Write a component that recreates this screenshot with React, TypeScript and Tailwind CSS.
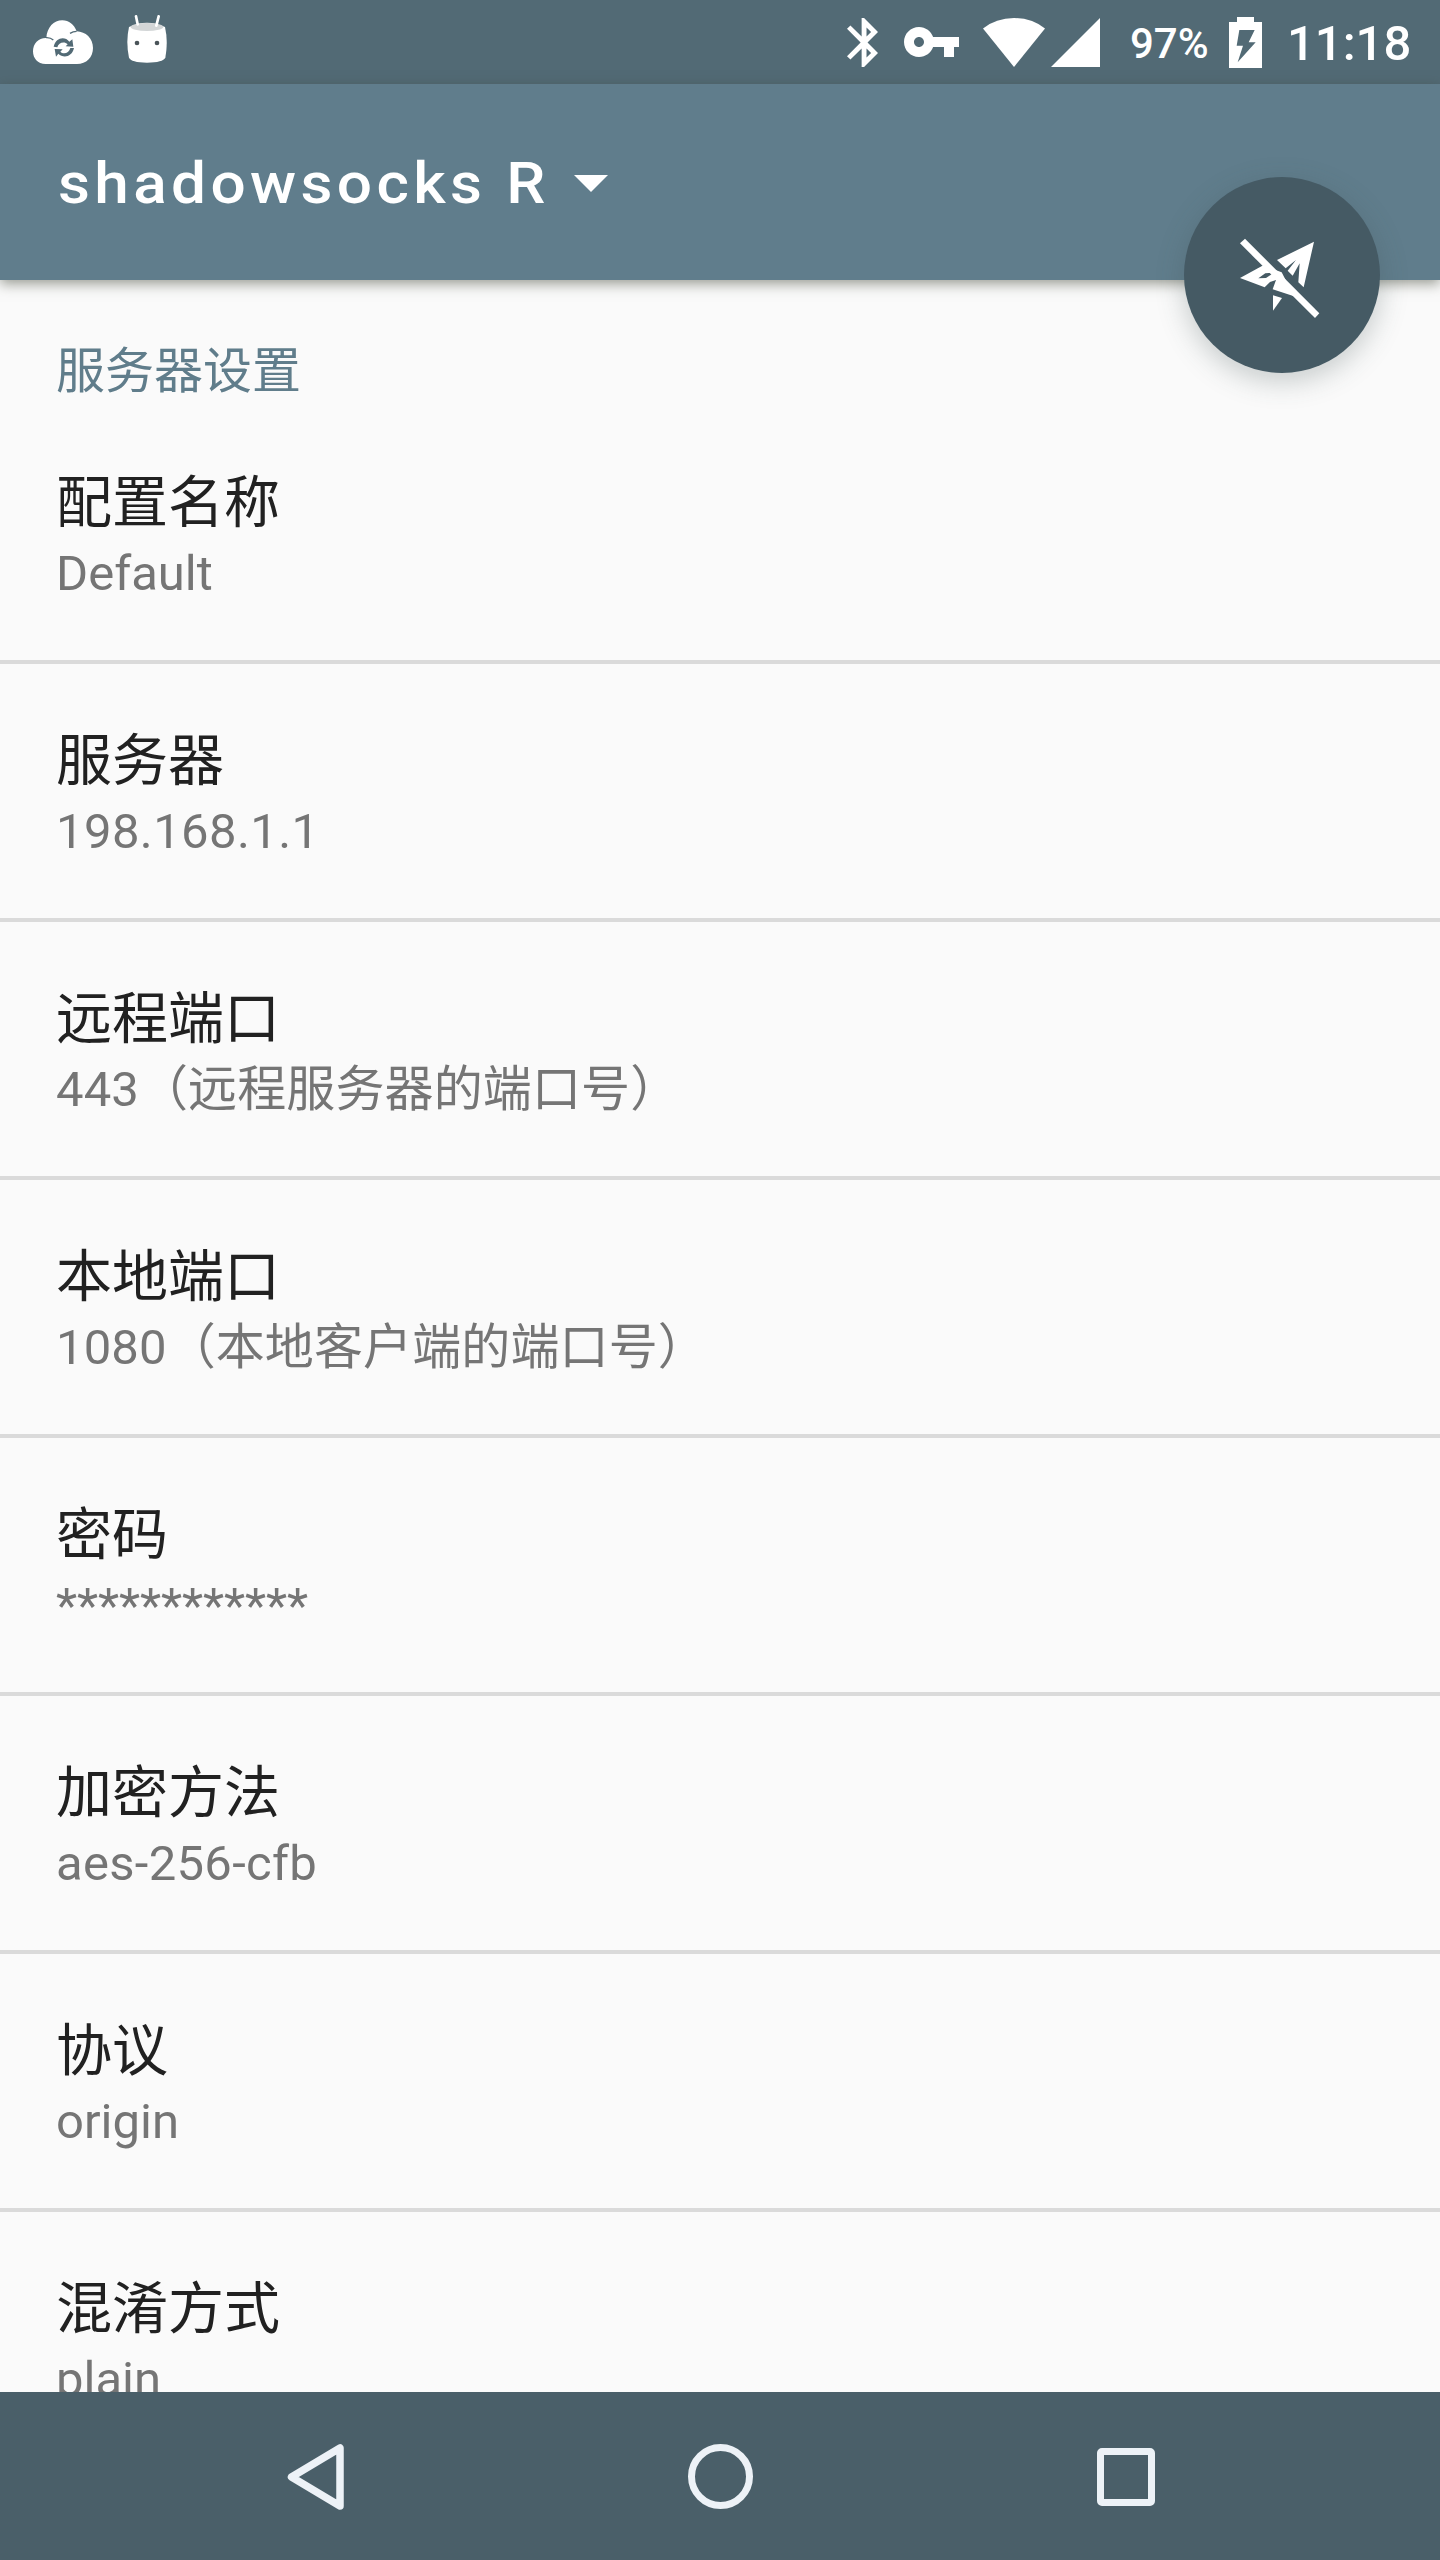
import React from 'react'

const settings = [
  { title: '配置名称', summary: 'Default', tracking: '' },
  { title: '服务器', summary: '198.168.1.1', tracking: 'tracking-[0.4px]' },
  { title: '远程端口', summary: '443（远程服务器的端口号）', tracking: 'tracking-[0.12px]' },
  { title: '本地端口', summary: '1080（本地客户端的端口号）', tracking: 'tracking-[0.12px]' },
  { title: '密码', summary: '************', tracking: 'tracking-[-0.1px]' },
  { title: '加密方法', summary: 'aes-256-cfb', tracking: 'tracking-[0.3px]' },
  { title: '协议', summary: 'origin', tracking: '' },
  { title: '混淆方式', summary: 'plain', tracking: '' },
]

const StatusBar = () => {
  return (
    <div className="flex h-[84px] shrink-0 items-center bg-[#526a75] pl-[33px] pr-[28px] text-white">
      {/* cloud sync */}
      <svg className="h-[44px] w-[60px]" viewBox="0 0 180 132" fill="currentColor">
        <path d="M38 132C14 132 0 115 0 94C0 71 17 53 40 54C42 22 62 1 88 1C108 1 123 13 131 34C158 35 180 55 180 84C180 112 160 132 132 132Z" />
        <path d="M39 53Q52 52 61 60M131 34Q120 34 111 40" fill="none" stroke="#526a75" strokeWidth="4" />
        <path d="M62 80C68 52 96 48 109 65L118 58L121 80L98 79L104 73C94 62 76 68 73 82Z" fill="#526a75" />
        <path d="M123 84C117 112 90 115 76 101L69 110L65 87L89 88L82 95C91 104 108 100 112 84Z" fill="#526a75" />
      </svg>
      {/* android marshmallow */}
      <svg className="-mt-[7px] ml-[34px] h-[48px] w-[40px]" viewBox="0 0 120 144" fill="currentColor">
        <path d="M6 36Q60 10 114 36Q124 80 115 128Q108 142 60 143Q12 142 6 128Q-4 80 6 36Z" />
        <ellipse cx="60" cy="36" rx="49" ry="12" fill="#d3d6d7" />
        <path d="M27 4L32 28M95 4L88 32" stroke="currentColor" strokeWidth="8" strokeLinecap="round" />
        <circle cx="30" cy="84" r="7" fill="#4a5459" />
        <circle cx="90" cy="84" r="7" fill="#4a5459" />
      </svg>
      <svg className="ml-auto h-[49px] w-[31px]" viewBox="5 2 12.71 20" fill="currentColor">
        <path d="M17.71 7.71L12 2h-1v7.59L6.41 5 5 6.41 10.59 12 5 17.59 6.41 19 11 14.41V22h1l5.71-5.71-4.3-4.29 4.3-4.29zM13 5.83l1.88 1.88L13 9.59V5.83zm1.88 10.46L13 18.17v-3.76l1.88 1.88z" />
      </svg>
      <svg className="ml-[26px] h-[30px] w-[55px]" viewBox="1 6 22 12" fill="currentColor">
        <path d="M12.65 10C11.83 7.67 9.61 6 7 6c-3.31 0-6 2.69-6 6s2.69 6 6 6c2.61 0 4.83-1.67 5.65-4H17v4h4v-4h2v-4H12.65zM7 14c-1.1 0-2-.9-2-2s.9-2 2-2 2 .9 2 2-.9 2-2 2z" />
      </svg>
      <svg className="ml-[24px] h-[49px] w-[62px]" viewBox="0 0 62 49" fill="currentColor">
        <path d="M0 10.5Q13 0 31 0T62 10.5L31 49Z" />
      </svg>
      <svg className="ml-[6px] h-[49px] w-[49px]" viewBox="0 0 49 49" fill="currentColor">
        <path d="M49 0V49H0Z" />
      </svg>
      <span className="mt-[3px] ml-[30px] w-[80px] text-[42px] leading-none font-medium">97%</span>
      <svg className="ml-[19px] h-[51px] w-[33px]" viewBox="0 0 99 153" fill="currentColor">
        <path d="M24 0H75V15H99V153H0V15H24Z" />
        <path d="M31 39H77L59 76H80L26 136L42 86H23Z" fill="#526a75" />
      </svg>
      <span className="mt-[2px] ml-[25px] w-[125px] text-[49px] leading-none font-medium">11:18</span>
    </div>
  )
}

const AppBar = () => {
  return (
    <div className="relative z-10 flex h-[196px] shrink-0 items-center bg-[#607d8c] pl-[58px] text-white shadow-[0_4px_12px_rgba(60,65,50,0.5)]">
      <h1 className="mt-[2px] w-[488px] origin-left scale-x-[1.09] text-[57px] leading-none font-medium tracking-[4px] whitespace-nowrap">shadowsocks R</h1>
      <svg className="mt-[3px] ml-[28px] h-[17px] w-[34px]" viewBox="0 0 34 17" fill="currentColor">
        <path d="M0 0H34L17 17Z" />
      </svg>
      <button className="absolute top-[93px] right-[60px] flex size-[196px] items-center justify-center rounded-full bg-[#455a64] shadow-[0_8px_28px_rgba(60,80,80,0.28)]">
        <svg className="mt-[5px] -ml-[4px] h-[80px] w-[80px]" viewBox="270 262 240 240" fill="currentColor">
          <path d="M285 264L508 488L495 502L270 278Z" />
          <path d="M492 273L461 410L445 395L449 338L428 375L413 360L438 328L407 353L381 328Z" />
          <path fillRule="evenodd" d="M340 344L270 382L344 410L360 394L378 388L368 416L432 437L395 365ZM325 383L346 368L372 366L348 382Z" />
          <path d="M369 434L396 442L369 480Z" />
        </svg>
      </button>
    </div>
  )
}

const NavBar = () => {
  return (
    <div className="flex h-[168px] shrink-0 items-center bg-[#4a5f69] pt-px pl-[287px] text-[#edf2f7]">
      <svg className="h-[66px] w-[57px]" viewBox="0 0 57 66" fill="none" stroke="currentColor" strokeWidth="7.5" strokeLinejoin="round">
        <path d="M4.5 33L53 4V62Z" />
      </svg>
      <div className="ml-[344px] size-[65px] rounded-full border-[7.5px] border-current" />
      <div className="ml-[344px] size-[58px] rounded-[5px] border-[7px] border-current" />
    </div>
  )
}

export default function App() {
  return (
    <div className="flex h-[2560px] w-[1440px] flex-col overflow-hidden bg-[#fafafa] font-['Roboto','Noto_Sans_CJK_SC',sans-serif]">
      <StatusBar />
      <AppBar />
      <div className="min-h-0 flex-1 overflow-hidden">
        <h2 className="h-[126px] pt-[56px] pl-[56px] text-[49px] leading-[72px] text-[#607d8b]">服务器设置</h2>
        {settings.map((item) => (
          <div key={item.title} className="h-[258px] border-b-4 border-[#dadada] pt-[57px] pl-[56px]">
            <p className="text-[56px] leading-[80px] text-[#212121]">{item.title}</p>
            <p className={`text-[49px] leading-[62px] text-[#757575] ${item.tracking}`}>{item.summary}</p>
          </div>
        ))}
      </div>
      <NavBar />
    </div>
  )
}
